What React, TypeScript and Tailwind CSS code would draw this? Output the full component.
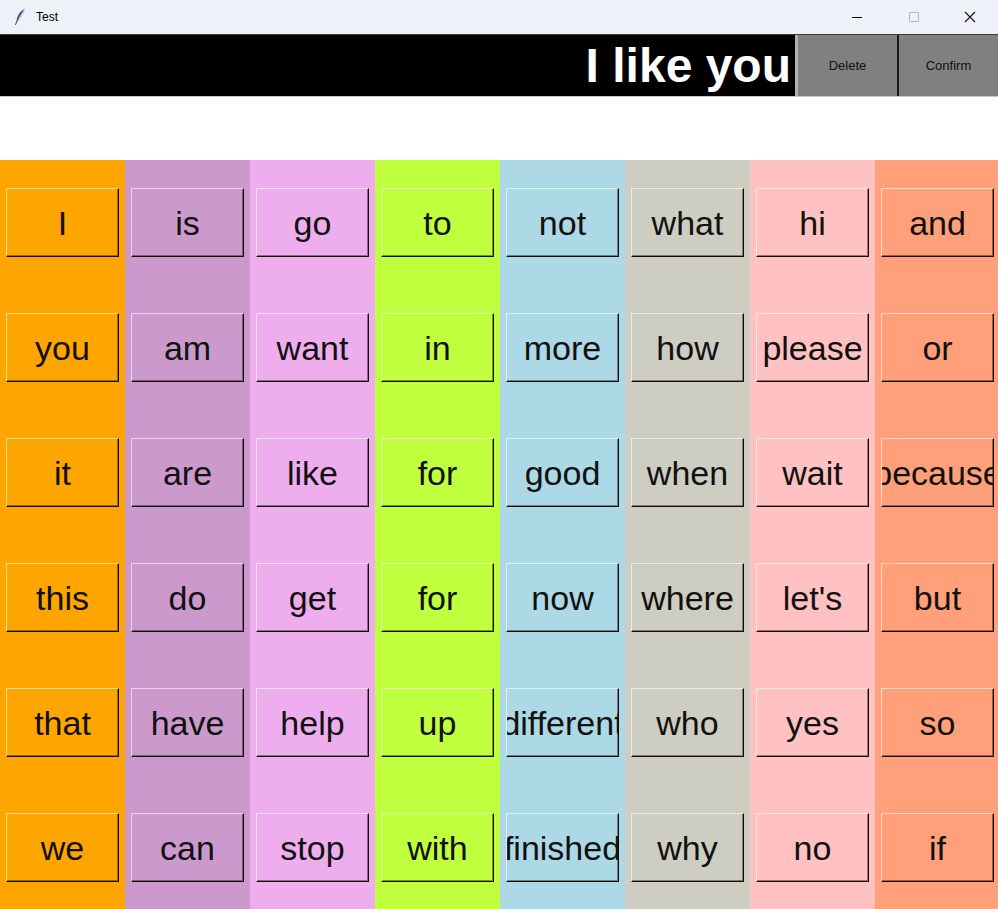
const columns = [
  { color: 'bg-[#ffa500]', words: ['I', 'you', 'it', 'this', 'that', 'we'] },
  { color: 'bg-[#cc99cc]', words: ['is', 'am', 'are', 'do', 'have', 'can'] },
  { color: 'bg-[#eeaeee]', words: ['go', 'want', 'like', 'get', 'help', 'stop'] },
  { color: 'bg-[#c0ff3e]', words: ['to', 'in', 'for', 'for', 'up', 'with'] },
  { color: 'bg-[#add8e6]', words: ['not', 'more', 'good', 'now', 'different', 'finished'] },
  { color: 'bg-[#cdcdc1]', words: ['what', 'how', 'when', 'where', 'who', 'why'] },
  { color: 'bg-[#ffc1c1]', words: ['hi', 'please', 'wait', "let's", 'yes', 'no'] },
  { color: 'bg-[#ffa07a]', words: ['and', 'or', 'because', 'but', 'so', 'if'] },
];

function Feather() {
  return (
    <svg width="12" height="18" viewBox="0 0 12 18">
      <path d="M10.5 1 C6 3 3 8 2.5 13 L3.5 13.5 C5 9 8.5 5 10.5 1 Z" fill="#3d5a80" />
      <path d="M10.5 1 C9 6 6 11 3.5 13.5" stroke="#9fb6d6" strokeWidth="0.8" fill="none" />
      <path d="M2.8 13 L1.5 17" stroke="#444" strokeWidth="1" />
    </svg>
  );
}

function TitleBar() {
  return (
    <div className="flex h-[35px] items-center border-b border-[#3a3a3a] bg-[#eef1f8]">
      <div className="ml-[13px] flex w-[14px] justify-center">
        <Feather />
      </div>
      <span className="ml-[9px] text-[12px] text-black">Test</span>
      <div className="ml-auto flex h-full">
        <div className="flex w-[57px] items-center justify-center">
          <div className="h-px w-[10px] bg-black" />
        </div>
        <div className="flex w-[57px] items-center justify-center">
          <div className="h-[10px] w-[10px] rounded-[1px] border border-[#b5b7bc]" />
        </div>
        <div className="flex w-[56px] items-center justify-center">
          <svg width="12" height="12" viewBox="0 0 12 12">
            <path d="M1 1 L11 11 M11 1 L1 11" stroke="#111" strokeWidth="1.1" />
          </svg>
        </div>
      </div>
    </div>
  );
}

function Header() {
  return (
    <div className="flex h-[62px] border-b border-[#c8c8c8] bg-black">
      <div className="flex flex-1 items-center justify-end overflow-hidden pr-[4px]">
        <span className="text-[48px] leading-none font-bold whitespace-nowrap text-white">I like you</span>
      </div>
      <button className="w-[104px] border-l-[3px] border-r-2 border-l-[#b0b0b0] border-r-[#1a1a1a] bg-[#808080] text-[13px] text-[#111]">
        Delete
      </button>
      <button className="w-[99px] bg-[#808080] text-[13px] text-[#111]">Confirm</button>
    </div>
  );
}

export default function App() {
  return (
    <div className="h-[909px] w-[998px] overflow-hidden bg-white font-['Liberation_Sans',Arial,sans-serif]">
      <TitleBar />
      <Header />
      <div className="h-[63px]" />
      <div className="grid grid-cols-[repeat(7,125px)_1fr]">
        {columns.map((col, ci) => (
          <div key={ci} className={`${col.color} flex flex-col`}>
            {col.words.map((word, wi) => (
              <div key={wi} className="h-[125px] pt-[28px] pl-[6px]">
                <div className="flex h-[69px] w-[113px] items-center justify-center overflow-hidden border border-t-white/60 border-l-white/60 border-b-[#140d05] border-r-[#140d05] shadow-[inset_-1px_-1px_0_rgba(0,0,0,0.4)]">
                  <span className="text-[34px] leading-none whitespace-nowrap text-[#111]">{word}</span>
                </div>
              </div>
            ))}
          </div>
        ))}
      </div>
    </div>
  );
}
